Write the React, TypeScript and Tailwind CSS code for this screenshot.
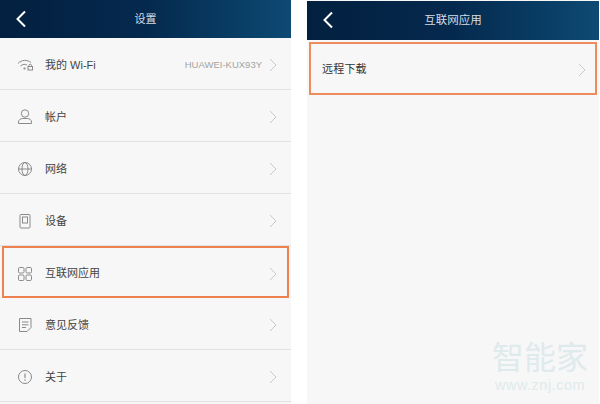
import React from "react";

function Chevron() {
  return (
    <svg width="8" height="14" viewBox="0 0 8 14" fill="none" className="shrink-0">
      <path d="M1 1 L7 7 L1 13" stroke="#cacaca" strokeWidth="1" />
    </svg>
  );
}

function Back() {
  return (
    <svg width="12" height="18" viewBox="0 0 12 18" fill="none">
      <path d="M10 1.5 L2.5 9 L10 16.5" stroke="#ffffff" strokeWidth="2" />
    </svg>
  );
}

const ic = { stroke: "#8a8a8a", strokeWidth: 1, fill: "none" };

const icons: Record<string, React.ReactNode> = {
  wifi: (
    <svg width="18" height="18" viewBox="0 0 18 18">
      <path d="M2 7.5 C6 3.5 11 3.5 15 6.5" {...ic} />
      <path d="M4.5 10 C7 8 9 8 11 9" {...ic} />
      <circle cx="8.5" cy="12.5" r="1.1" fill="#8a8a8a" />
      <rect x="12" y="10.5" width="4.5" height="3.5" {...ic} />
      <path d="M13 10.5 V9.5 a1.2 1.2 0 0 1 2.5 0 V10.5" {...ic} />
    </svg>
  ),
  user: (
    <svg width="18" height="18" viewBox="0 0 18 18">
      <circle cx="9" cy="5.5" r="3.7" {...ic} />
      <path d="M2.5 15.5 V14 C2.5 11.5 5 10.5 6.5 10.5 H11.5 C13 10.5 15.5 11.5 15.5 14 V15.5 Z" {...ic} />
    </svg>
  ),
  globe: (
    <svg width="18" height="18" viewBox="0 0 18 18">
      <circle cx="9" cy="9" r="6.5" {...ic} />
      <ellipse cx="9" cy="9" rx="3" ry="6.5" {...ic} />
      <path d="M2.5 9 H15.5" {...ic} />
    </svg>
  ),
  device: (
    <svg width="18" height="18" viewBox="0 0 18 18">
      <rect x="4" y="2.5" width="10" height="13.5" rx="1" {...ic} />
      <rect x="6.5" y="5" width="5" height="6" {...ic} />
    </svg>
  ),
  apps: (
    <svg width="18" height="18" viewBox="0 0 18 18">
      <rect x="2.5" y="2.5" width="5.5" height="5.5" rx="1.2" {...ic} />
      <rect x="10" y="2.5" width="5.5" height="5.5" rx="1.2" {...ic} />
      <rect x="2.5" y="10" width="5.5" height="5.5" rx="1.2" {...ic} />
      <rect x="10" y="10" width="5.5" height="5.5" rx="1.2" {...ic} />
    </svg>
  ),
  note: (
    <svg width="18" height="18" viewBox="0 0 18 18">
      <path d="M3.5 2.5 H15 V11.5 L11 15.5 H3.5 Z" {...ic} />
      <path d="M6 6 H12.5 M6 8.8 H12.5 M6 11.5 H10" {...ic} />
    </svg>
  ),
  info: (
    <svg width="18" height="18" viewBox="0 0 18 18">
      <circle cx="9" cy="9" r="6.5" {...ic} />
      <path d="M9 5.5 V10" stroke="#8a8a8a" strokeWidth="1.2" />
      <circle cx="9" cy="12" r="0.8" fill="#8a8a8a" />
    </svg>
  ),
};

const rows = [
  { icon: "wifi", label: "我的 Wi-Fi", value: "HUAWEI-KUX93Y" },
  { icon: "user", label: "帐户" },
  { icon: "globe", label: "网络" },
  { icon: "device", label: "设备" },
  { icon: "apps", label: "互联网应用", hi: true },
  { icon: "note", label: "意见反馈" },
  { icon: "info", label: "关于" },
];

function Header({ title, tall }: { title: string; tall?: boolean }) {
  return (
    <div
      className={
        tall
          ? "relative h-[39px] shrink-0 flex items-center justify-center bg-gradient-to-r from-[#03203f] via-[#05294e] to-[#0d4a73]"
          : "relative h-[38px] shrink-0 flex items-center justify-center bg-gradient-to-r from-[#03203f] via-[#05294e] to-[#0d4a73]"
      }
    >
      <div className="absolute left-[15px] top-[10px] flex">
        <Back />
      </div>
      <span className={tall ? "text-[11.5px] text-[#d4dde6]" : "text-[11px] text-[#d4dde6]"}>{title}</span>
    </div>
  );
}

export default function App() {
  return (
    <div
      className="relative flex w-[600px] h-[404px] overflow-hidden bg-white"
      style={{ fontFamily: '"Liberation Sans", "Noto Sans CJK SC", sans-serif' }}
    >
      <div className="w-[291px] h-full flex flex-col bg-[#f7f7f7]">
        <Header title="设置" />
        {rows.map((r) => (
          <div
            key={r.label}
            className={
              r.hi
                ? "h-[52px] shrink-0 flex items-center mx-[2px] pt-[3px] pl-[12px] pr-[10px] border-2 border-[#ee8150]"
                : "h-[52px] shrink-0 flex items-center pt-[3px] pl-[16px] pr-[14px] border-b border-[#e2e2e2]"
            }
          >
            <div className="w-[18px] flex justify-center">{icons[r.icon]}</div>
            <span className="ml-[11px] text-[11px] text-[#444444]">{r.label}</span>
            <span className="ml-auto mr-[7px] text-[9.5px] text-[#a3a3a3]">{r.value}</span>
            <Chevron />
          </div>
        ))}
      </div>
      <div className="ml-[16px] w-[292px] h-full flex flex-col bg-[#f7f7f7] pt-[1px]">
        <Header title="互联网应用" tall />
        <div className="mx-[2px] mt-[2px] h-[53px] flex items-center justify-between pt-[2px] pl-[11px] pr-[9px] border-2 border-[#ee8c5e]">
          <span className="text-[11px] text-[#333333] tracking-[0.2px]">远程下载</span>
          <Chevron />
        </div>
      </div>
      <div className="absolute left-[490px] top-[342px] w-[100px] flex flex-col items-center leading-none text-[#dfeaec]">
        <span className="text-[32px]">智能家</span>
        <span className="mt-[4px] text-[14.5px] tracking-[0.5px]">www.znj.com</span>
      </div>
    </div>
  );
}
